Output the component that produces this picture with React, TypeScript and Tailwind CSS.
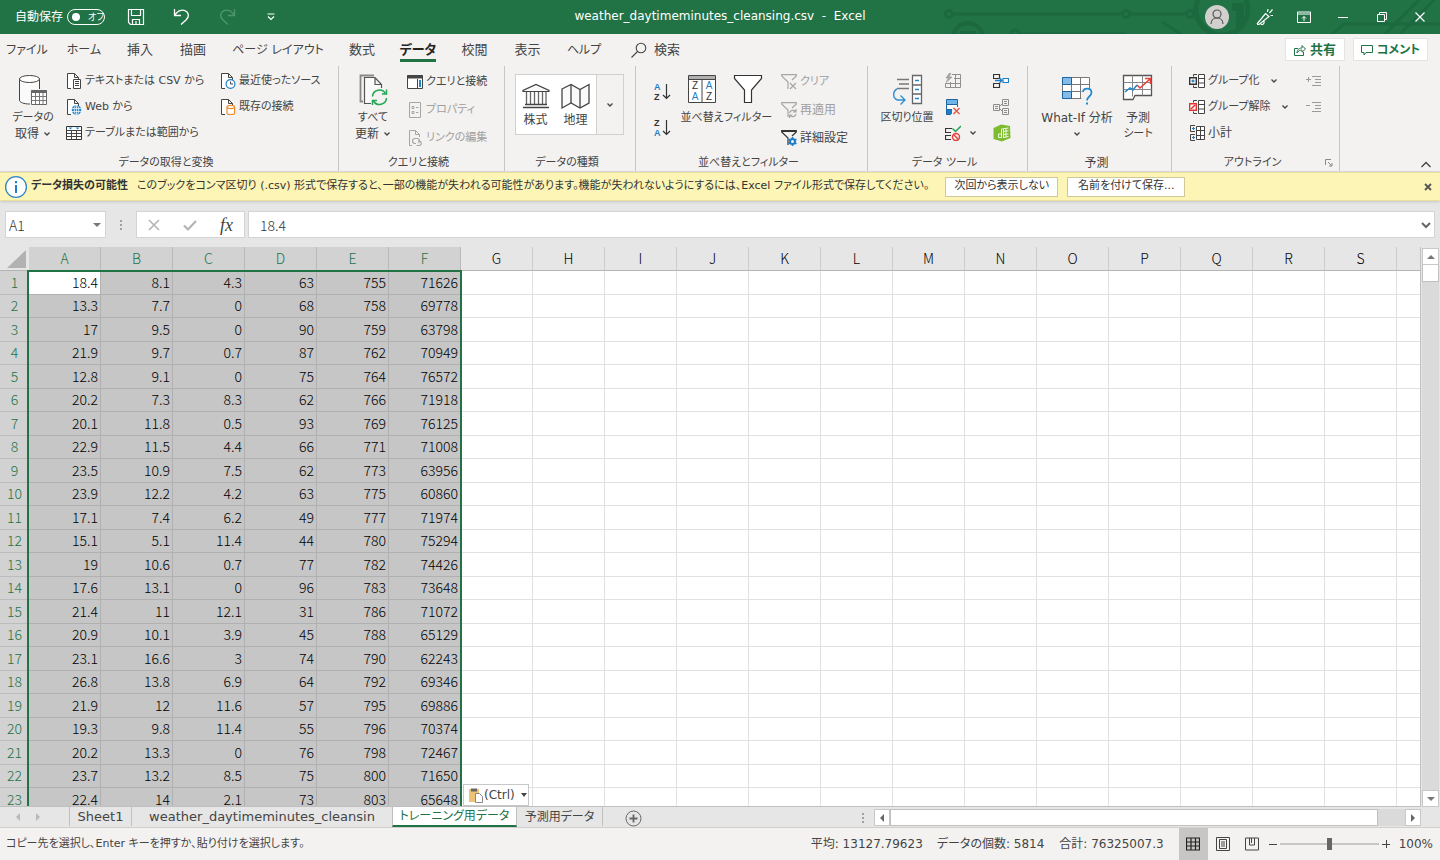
import React, { useState } from 'react';

const COLUMNS = ['A', 'B', 'C', 'D', 'E', 'F', 'G', 'H', 'I', 'J', 'K', 'L', 'M', 'N', 'O', 'P', 'Q', 'R', 'S'];
const SELECTED_COLUMNS = 6;

const ROWS = [
  [18.4, 8.1, 4.3, 63, 755, 71626],
  [13.3, 7.7, 0, 68, 758, 69778],
  [17, 9.5, 0, 90, 759, 63798],
  [21.9, 9.7, 0.7, 87, 762, 70949],
  [12.8, 9.1, 0, 75, 764, 76572],
  [20.2, 7.3, 8.3, 62, 766, 71918],
  [20.1, 11.8, 0.5, 93, 769, 76125],
  [22.9, 11.5, 4.4, 66, 771, 71008],
  [23.5, 10.9, 7.5, 62, 773, 63956],
  [23.9, 12.2, 4.2, 63, 775, 60860],
  [17.1, 7.4, 6.2, 49, 777, 71974],
  [15.1, 5.1, 11.4, 44, 780, 75294],
  [19, 10.6, 0.7, 77, 782, 74426],
  [17.6, 13.1, 0, 96, 783, 73648],
  [21.4, 11, 12.1, 31, 786, 71072],
  [20.9, 10.1, 3.9, 45, 788, 65129],
  [23.1, 16.6, 3, 74, 790, 62243],
  [26.8, 13.8, 6.9, 64, 792, 69346],
  [21.9, 12, 11.6, 57, 795, 69886],
  [19.3, 9.8, 11.4, 55, 796, 70374],
  [20.2, 13.3, 0, 76, 798, 72467],
  [23.7, 13.2, 8.5, 75, 800, 71650],
  [22.4, 14, 2.1, 73, 803, 65648],
];

const TABS = [
  { label: 'ファイル', style: 'w-[54px] text-xs' },
  { label: 'ホーム', style: 'w-[60px] text-xs' },
  { label: '挿入', style: 'w-[52px]' },
  { label: '描画', style: 'w-[54px]' },
  { label: 'ページ レイアウト', style: 'w-[116px] text-xs' },
  { label: '数式', style: 'w-[52px]' },
  { label: 'データ', style: 'w-[60px]' },
  { label: '校閲', style: 'w-[53px]' },
  { label: '表示', style: 'w-[53px]' },
  { label: 'ヘルプ', style: 'w-[60px] text-xs' },
];

// Kana labels are set one step smaller than kanji and Latin ones
const labelSize = (text: string) => (/[ぁ-んァ-ヶ]/.test(text) ? 'text-[11px]' : 'text-xs');

/* ---------- Icons ---------- */

type IconProps = { size?: number; width?: number; className?: string; children?: React.ReactNode };

const Icon = ({ size = 16, width, className = '', children }: IconProps) => (
  <svg
    width={width ?? size}
    height={size}
    viewBox={`0 0 ${width ?? size} ${size}`}
    fill="none"
    stroke="currentColor"
    aria-hidden="true"
    className={`shrink-0 ${className}`}
  >
    {children}
  </svg>
);

const Chevron = ({ className = '' }: { className?: string }) => (
  <Icon size={8} className={className}>
    <path d="M1.5 2.5 4 5l2.5-2.5" strokeWidth="1.3" />
  </Icon>
);

const Triangle = ({ dir }: { dir: 'up' | 'down' | 'left' | 'right' }) => {
  const shapes = { up: 'M0 6h8L4 2z', down: 'M0 2h8L4 6z', left: 'M6 0v8L2 4z', right: 'M2 0v8l4-4z' };
  return (
    <Icon size={8}>
      <path d={shapes[dir]} fill="currentColor" stroke="none" />
    </Icon>
  );
};

const PageShape = () => <path d="M5 15.5H1.5V.5h7l4 4V7M8.5.5v4h4" fill="#fff" stroke="#444" />;

const TextFileIcon = () => (
  <Icon>
    <PageShape />
    <path d="M7.5 6.5h7v9h-7z" fill="#fff" stroke="#444" />
    <path d="M9 8.5h4M9 10.5h4M9 12.5h4" stroke="#444" />
  </Icon>
);

const WebFileIcon = () => (
  <Icon>
    <PageShape />
    <circle cx="10.5" cy="11" r="4.8" fill="#1e88d2" stroke="none" />
    <path d="M6 9.500h9M6 12.500h9M10.5 6.5v9" stroke="#fff" strokeWidth=".7" />
    <ellipse cx="10.5" cy="11" rx="2.2" ry="4.5" stroke="#fff" strokeWidth=".7" />
  </Icon>
);

const RecentFileIcon = () => (
  <Icon>
    <PageShape />
    <circle cx="10.5" cy="11" r="4.4" fill="#fff" stroke="#1e7fc8" strokeWidth="1.2" />
    <path d="M10.5 8.5V11H13" stroke="#444" />
  </Icon>
);

const ExistingConnectionIcon = () => (
  <Icon>
    <PageShape />
    <path d="M7 8v6c0 1 1.6 1.6 3.8 1.6s3.8-.6 3.8-1.6V8" fill="#fff" stroke="#f08c28" strokeWidth="1.2" />
    <ellipse cx="10.8" cy="8" rx="3.8" ry="1.6" fill="#fff" stroke="#f08c28" strokeWidth="1.2" />
  </Icon>
);

const TableIcon = () => (
  <Icon>
    <path d="M.5 1.5h15v13H.5z" fill="#fff" stroke="#333" />
    <path d="M.5 5.5h15M.5 8.5h15M.5 11.5h15M5.5 5v9.5M10.5 5v9.5" stroke="#444" />
    <path d="M2.500 2.500h4l-2 2zM9.500 2.500h4l-2 2z" fill="#1e88d2" stroke="none" />
  </Icon>
);

const DatabaseIcon = () => (
  <Icon size={32}>
    <path d="M2.500 5v21c0 2.500 4.500 4 10 4s10-1.500 10-4V5" fill="#fafafa" stroke="#444" />
    <ellipse cx="12.500" cy="5" rx="10" ry="3.500" fill="#fff" stroke="#444" />
    <path d="M13 15h17v17H13z" fill="#f3f2f1" stroke="none" />
    <path d="M14.500 16.500h15v14h-15z" fill="#fff" stroke="#666" />
    <path d="M14.500 17.500h15" stroke="#666" strokeWidth="3" />
    <path d="M14.500 22.500h15M14.500 26.500h15M18.500 19v11M22.500 19v11M26 19v11" stroke="#777" />
  </Icon>
);

const RefreshAllIcon = () => (
  <Icon size={32}>
    <path d="M6 27.500H3.500v-26H17" stroke="#888" strokeWidth="1.800" />
    <path d="M14 29.500H7.500v-26H18l6.500 7V14M18 3.500v7h6.500" fill="#fafafa" stroke="#555" strokeWidth="1.200" />
    <circle cx="22.500" cy="23" r="9" fill="#f3f2f1" stroke="none" />
    <path d="M15.500 22.500a7 7 0 0 1 13-3M29.500 24a7 7 0 0 1-13 3" stroke="#21a655" strokeWidth="1.500" />
    <path d="M29.500 15.500v4.500H25M15.500 31v-4.500H20" stroke="#21a655" strokeWidth="1.500" />
  </Icon>
);

const QueriesIcon = () => (
  <Icon>
    <path d="M.5 1.500h15v13H.5z" fill="#fff" stroke="#444" />
    <path d="M0 3h16" stroke="#444" strokeWidth="3" />
    <path d="M10.500 5v9" stroke="#444" />
    <path d="M13 6v7" stroke="#1e88d2" strokeWidth="2" />
  </Icon>
);

const PropertiesIcon = () => (
  <Icon className="text-[#a6a6a6]">
    <path d="M2.500.5h11v15h-11z" />
    <path d="M5 4.500h2v2H5zM5 9.500h2v2H5zM9 5.500h2.500M9 10.500h2.500" />
  </Icon>
);

const EditLinksIcon = () => (
  <Icon className="text-[#a6a6a6]">
    <path d="M5 15.500H2.500V.5h6l4 4V7M8.500.5v4h4" />
    <path d="M9 13.500H8a2.500 2.500 0 0 1 0-5h2.500a2.500 2.500 0 0 1 1 4.500M11 11h1.500a2.300 2.300 0 0 1 0 4.500H9.500" strokeWidth="1.200" />
  </Icon>
);

const BankIcon = () => (
  <Icon size={28} className="text-[#444]">
    <path d="M1 8.500v-1L14 1.500l13 6v1z" fill="#fafafa" strokeWidth="1.200" />
    <path d="M4.500 9v12M8.500 9v12M12.500 9v12M16.500 9v12M20.500 9v12M24 9v12" stroke="#666" strokeWidth="1.300" />
    <path d="M3 21.500h22M1 24.500h26" strokeWidth="1.500" />
  </Icon>
);

const MapIcon = () => (
  <Icon size={28} width={30} className="text-[#444]">
    <path d="M1 6 10 1.500l9 5 9-5V20l-9 5-9-5-9 5z" fill="#fafafa" strokeWidth="1.300" />
    <path d="M10 1.500V20M19 6.500V25" strokeWidth="1.300" />
  </Icon>
);

const LetterSortIcon = ({ top, bottom }: { top: 'A' | 'Z'; bottom: 'A' | 'Z' }) => (
  <Icon size={22} width={20}>
    <g fontFamily="Liberation Sans, sans-serif" fontSize="9" fontWeight="bold" stroke="none">
      <text x="1" y="9" fill={top === 'A' ? '#1e7fc8' : '#333'}>{top}</text>
      <text x="1" y="19" fill={bottom === 'A' ? '#1e7fc8' : '#333'}>{bottom}</text>
    </g>
    <path d="M13.500 3v14M10 14l3.500 3.500L17 14" stroke="#333" strokeWidth="1.200" />
  </Icon>
);

const SortIcon = () => (
  <Icon size={30}>
    <path d="M1.500 1.500h27v27h-27z" fill="#fff" stroke="#444" />
    <path d="M2 3.500h26" stroke="#b0b0b0" strokeWidth="3" />
    <path d="M15 5v24M1 5.500h28" stroke="#444" />
    <g fontFamily="Liberation Sans, sans-serif" fontSize="10" stroke="none" textAnchor="middle">
      <text x="8" y="15" fill="#333">Z</text>
      <text x="8" y="26" fill="#1e7fc8">A</text>
      <text x="22" y="15" fill="#1e7fc8">A</text>
      <text x="22" y="26" fill="#333">Z</text>
    </g>
  </Icon>
);

const FilterIcon = () => (
  <Icon size={30}>
    <path d="M1.500 1.500h27v3L18.500 16v12.500h-7V16L1.500 4.500z" fill="#fff" stroke="#333" strokeWidth="1.200" />
  </Icon>
);

const SmallFunnel = () => <path d="M7 15V8L.7 2V.7h14.600V2L11 6" strokeWidth="1.200" />;

const ClearFilterIcon = () => (
  <Icon className="text-[#a6a6a6]">
    <SmallFunnel />
    <path d="m9 9 6 6M15 9l-6 6" strokeWidth="1.200" />
  </Icon>
);

const ReapplyIcon = () => (
  <Icon className="text-[#a6a6a6]">
    <SmallFunnel />
    <path d="M8.500 11a3.500 3.500 0 0 1 6-1.500M15 12a3.500 3.500 0 0 1-6 1.500M15 7v3h-3M8.500 16v-3h3" strokeWidth="1.200" />
  </Icon>
);

const AdvancedFilterIcon = () => (
  <Icon className="text-[#333]">
    <SmallFunnel />
    <path d="M1 1h14" strokeWidth="2" />
    <circle cx="11.500" cy="11.500" r="2.500" stroke="#1e7fc8" strokeWidth="2" />
    <path d="M11.500 7v2M11.500 14v2M7.500 9.300l2 1M13.500 12.700l2 1M7.500 13.700l2-1M13.500 10.300l2-1" stroke="#1e7fc8" strokeWidth="1.600" />
  </Icon>
);

const TextToColumnsIcon = () => (
  <Icon size={32}>
    <path d="M6 5.500h12M8 10h10M6 14.500h12" stroke="#777" strokeWidth="1.500" />
    <path d="M21.500 1.500h9v28h-9zM21.500 11h9M21.500 20h9" fill="#fff" stroke="#666" strokeWidth="1.300" />
    <path d="M24 6.500h4M24 15.500h4M24 24.500h4" stroke="#1e88d2" strokeWidth="1.500" />
    <path d="M6 15c-4 2-5 9 .5 11H13M9.500 21.500 14 26l-4.500 4.500" stroke="#2f8fd0" strokeWidth="1.400" />
  </Icon>
);

const FlashFillIcon = () => (
  <Icon className="text-[#8f8f8f]">
    <path d="M7 1.500h8.500v13H.5v-4M9 5.500h6.500M.5 10.500h15M10.500 1.500v13M5.500 9v5.500" />
    <path d="M4.500 0 1 5h2.500L1 9.500 7 4H4l2-4z" fill="#aaa" strokeWidth=".6" />
  </Icon>
);

const RemoveDuplicatesIcon = () => (
  <Icon>
    <path d="M1.500.5h11v5h-11z" fill="#6fb4e8" stroke="#1e64a0" />
    <path d="M1.500 5.500h11v5h-11z" fill="#fff" stroke="#1e64a0" />
    <path d="M1.500 10.500h4l2 2.500-2 2.500h-4z" fill="#1e7fc8" stroke="#1e64a0" />
    <path d="M7 8h8v8H7z" fill="#f3f2f1" stroke="none" />
    <path d="m8.500 9 6 6M14.500 9l-6 6" stroke="#e8504a" strokeWidth="1.300" />
  </Icon>
);

const ValidationIcon = () => (
  <Icon>
    <path d="M7 3.500H.5v4H6M6 10.500H.5v4H6" stroke="#333" strokeWidth="1.200" />
    <path d="m7.500 3.500 3 3L16 1" stroke="#21a655" strokeWidth="1.500" />
    <circle cx="11" cy="12" r="3.500" stroke="#e8403a" strokeWidth="1.400" />
    <path d="m8.500 9.500 5 5" stroke="#e8403a" strokeWidth="1.400" />
  </Icon>
);

const ConsolidateIcon = () => (
  <Icon>
    <path d="M.5 1.500h6v4h-6zM.5 10.500h6v4h-6z" stroke="#333" strokeWidth="1.200" />
    <path d="M2 7.500h7M6.500 5 9 7.500 6.500 10" stroke="#1e7fc8" strokeWidth="1.300" />
    <path d="M10 5.500h5.500v4H10z" fill="#fff" stroke="#1e7fc8" strokeWidth="1.200" />
  </Icon>
);

const RelationshipsIcon = () => (
  <Icon className="text-[#8c8c8c]">
    <path d="M.5 5.500h6v6h-6zM2 7.500h3M2 9.500h3M9.500.5h6v6h-6zM11 2.500h3M11 4.500h3M9.500 9.500h6v6h-6zM11 11.500h3M11 13.500h3M6.500 7.500l3-3M6.500 9.500l3 3" />
  </Icon>
);

const DataModelIcon = () => (
  <Icon size={18}>
    <path d="M.5 4 8 .5l9 1.500.5 12-8.500 3.500L.5 15z" fill="#7dbb2f" stroke="none" />
    <path d="M8.500 5v8.500h-3V10h3M8.500 5l7-1M10.500 7.500l5-.8M10.500 10.500l5-.5M10.500 13.500l5-1M13 4.500v9M10.500 5v9" stroke="#eef8dd" strokeWidth="1" />
  </Icon>
);

const WhatIfIcon = () => (
  <Icon size={32}>
    <path d="M1.500 3.500h27v21h-27z" fill="#fff" stroke="#777" />
    <path d="M1.500 10.500h27M1.500 17.500h27M10.500 3.500v21M19.500 3.500v21" stroke="#777" />
    <path d="M1.500 3.500h9v7h-9zM1.500 17.500h9v7h-9z" fill="#83bce9" stroke="#1e64a0" />
    <path d="M20.500 14h11v17h-11z" fill="#f3f2f1" stroke="none" />
    <path d="M22 18c.5-4.500 8.500-4.500 8.500.5 0 4-4.500 4-4.500 8" stroke="#1e88d2" strokeWidth="1.700" />
    <path d="M25 28.500h2v2h-2z" fill="#1e88d2" stroke="none" />
  </Icon>
);

const ForecastIcon = () => (
  <Icon size={32}>
    <path d="M1.500 1.500h28v20H13l-2 4H1.500z" fill="#fff" stroke="#555" strokeWidth="1.300" />
    <path d="M1.500 8.500h28M1.500 15.500h28M10.500 1.500v21M20.500 1.500v20" stroke="#888" />
    <path d="m3 18 5-4 3 2 4-5" stroke="#1e88d2" strokeWidth="1.600" />
    <path d="m15 11 3 3 10-9M23 4.500h5.500V10" stroke="#e8403a" strokeWidth="1.600" />
  </Icon>
);

const GroupIcon = ({ remove = false }: { remove?: boolean }) => (
  <Icon>
    <path d="M9.500 1.500h6v13h-6zM9.500 5.500h6M9.500 10h6" fill="#fff" stroke="#444" />
    <path d="M8 1.500H4.500v2M8 14.500H4.500v-2" stroke="#444" />
    <path d="M.7 4.700h6.600v6.600H.7z" fill="#fff" stroke={remove ? '#e03530' : '#333'} strokeWidth="1.400" />
    {remove ? (
      <path d="m2 10 4-4" stroke="#e03530" strokeWidth="1.600" />
    ) : (
      <path d="M4 6.500v3M2.500 8h3" stroke="#1e7fc8" strokeWidth="1.300" />
    )}
  </Icon>
);

const SubtotalIcon = () => (
  <Icon>
    <path d="M7.500 1.500h8v13h-8zM7.500 5.500h8M7.500 10.500h8M11.500 1.500v13" fill="#fff" stroke="#444" />
    <path d="M6 .5H1.500v6H6M6 9.500H1.500v6H6" stroke="#444" />
    <path d="M3 3.500h3M4.500 2v3M3 12.500h3M4.500 11v3" stroke="#1e7fc8" />
  </Icon>
);

const DetailIcon = ({ hide = false }: { hide?: boolean }) => (
  <Icon className="text-[#9a9a9a]">
    <path d={hide ? 'M0 6.500h4' : 'M0 6.500h5M2.500 4v5'} />
    <path d="M6 3.500h9M9 6.500h6M9 9.500h6M6 12.500h9" />
  </Icon>
);

/* ---------- Ribbon pieces ---------- */

const Group = ({ label, width, launcher = false, children }: { label: string; width: string; launcher?: boolean; children: React.ReactNode }) => (
  <section aria-label={label} className={`flex shrink-0 flex-col border-r border-[#c8c6c4] ${width}`}>
    <div className="flex h-[89px] pt-[2px]">{children}</div>
    <div className="flex h-4 items-center justify-center">
      <span className="flex-1" />
      <span className={`whitespace-nowrap leading-4 ${labelSize(label)}`}>{label}</span>
      <span className="flex flex-1 justify-end pr-[6px]">
        {launcher && (
          <button aria-label="アウトラインの設定" className="text-[#8a8886]">
            <Icon size={8}>
              <path d="M.5 6V.5H6M3 3l4 4M7 4v3H4" />
            </Icon>
          </button>
        )}
      </span>
    </div>
  </section>
);

const LargeButton = ({ icon, lines, width, arrow }: { icon: React.ReactNode; lines: string[]; width: string; arrow?: 'inline' | 'below' }) => (
  <button className={`flex shrink-0 flex-col items-center pt-[6px] ${width}`}>
    <span className="flex h-9 items-start justify-center">{icon}</span>
    {lines.map((line, i) => (
      <span key={line} className={`flex h-4 items-center whitespace-nowrap leading-4 ${labelSize(line)}`}>
        {line}
        {arrow === 'inline' && i === lines.length - 1 && <Chevron className="ml-1" />}
      </span>
    ))}
    {arrow === 'below' && <Chevron className="mt-1" />}
  </button>
);

const SmallButton = ({ icon, label, disabled, tall, arrow }: { icon: React.ReactNode; label: string; disabled?: boolean; tall?: boolean; arrow?: boolean }) => (
  <button
    disabled={disabled}
    className={`flex items-center gap-[3px] whitespace-nowrap ${labelSize(label)} ${tall ? 'h-7' : 'h-[26px]'} ${disabled ? 'text-[#a19f9d]' : ''}`}
  >
    {icon}
    {label}
    {arrow && <Chevron className="ml-[7px]" />}
  </button>
);

const IconButton = ({ label, children }: { label: string; children: React.ReactNode }) => (
  <button aria-label={label} className="flex h-[26px] items-center gap-2">
    {children}
  </button>
);

/* ---------- Page sections ---------- */

const TitleBar = () => (
  <header className="relative flex h-[34px] shrink-0 items-center overflow-hidden bg-[#217346] text-white">
    <svg width="500" height="34" fill="none" stroke="#1d693f" strokeWidth="3" aria-hidden="true" className="absolute right-0 top-0">
      <circle cx="9" cy="14" r="3.500" />
      <path d="M13 14h169M190 14h56" />
      <circle cx="186" cy="14" r="3.500" />
      <circle cx="250" cy="14" r="3.500" />
      <circle cx="282" cy="9" r="26" strokeWidth="5" />
      <path d="M292 7h8v22" strokeWidth="8" />
      <circle cx="28" cy="38" r="15" strokeWidth="4" />
      <path d="M20 33h16" strokeWidth="4" />
      <circle cx="75" cy="34" r="4" />
      <path d="M80 34h105M222 22l22 14" />
      <path d="m390 36 14-12h96M445 34l34-34M460 34l34-34" />
    </svg>
    <label className="relative flex items-center gap-1 whitespace-nowrap pl-[15px]">
      自動保存
      <input type="checkbox" role="switch" className="sr-only" />
      <span className="flex h-4 w-[38px] items-center gap-2 rounded-full border border-white pl-1 text-[9px] leading-3">
        <span className="size-2 shrink-0 rounded-full bg-white" />
        オフ
      </span>
    </label>
    <div className="relative flex items-center pl-[22px]">
      <button aria-label="上書き保存">
        <Icon size={18}>
          <path d="M1.500 1.500h15v15h-13l-2-2zM4.500 1.500v6h9v-6M5.500 16.500v-5h7v5M9 13v3" strokeWidth="1.200" />
        </Icon>
      </button>
      <button aria-label="元に戻す" className="ml-[28px]">
        <Icon size={18}>
          <path d="M1.500 1v6.500H8M2 7c3-5.500 9-6 12-3 2.500 3 1.500 5.500-1 8L8 16.500" strokeWidth="1.300" />
        </Icon>
      </button>
      <button aria-label="やり直し" disabled className="ml-[28px] text-[#4f9670]">
        <Icon size={18}>
          <path d="M15.500 1v6.500H9M15 7c-3-5.500-9-6-12-3-2.500 3-1.500 5.500 1 8l5 4.500" strokeWidth="1.300" />
        </Icon>
      </button>
      <button aria-label="クイック アクセス ツール バーのカスタマイズ" className="ml-[30px]">
        <Icon size={8}>
          <path d="M.5 1h7M1 3.500l3 3 3-3" strokeWidth="1.200" />
        </Icon>
      </button>
    </div>
    <h1 className="pointer-events-none absolute inset-x-0 top-0 flex h-8 items-center justify-center whitespace-pre font-normal">
      weather_daytimeminutes_cleansing.csv  -  Excel
    </h1>
    <div className="relative ml-auto flex items-center">
      <button aria-label="アカウント" className="flex size-6 items-center justify-center rounded-full bg-[#d2d0ce] text-[#555]">
        <Icon size={16}>
          <circle cx="8" cy="5" r="4" strokeWidth="1.200" />
          <path d="M2 15c0-8 12-8 12 0" strokeWidth="1.200" />
        </Icon>
      </button>
      <button aria-label="新機能" className="ml-[27px]">
        <Icon size={18}>
          <path d="m1 16 8.500-10.500 3.500 3L3 16.500H1M4.500 15.500c1.500 2 4 1 3.500-2.500M11.500 4l.5-3M13.500 5l3-3.500M14.500 7.500H17" strokeWidth="1.200" />
        </Icon>
      </button>
      <button aria-label="リボンの表示オプション" className="ml-[23px]">
        <Icon size={14}>
          <path d="M.5 2h13v10.500H.5zM.5 4h13M7 11V6.500M5 8.500l2-2 2 2" />
        </Icon>
      </button>
      <button aria-label="最小化" className="ml-[26px]">
        <Icon size={12}><path d="M1 6.500h10" /></Icon>
      </button>
      <button aria-label="元に戻す（縮小）" className="ml-[27px]">
        <Icon size={12}><path d="M1.500 3.500h7v7h-7zM3.500 3V1.500h7v7H9" /></Icon>
      </button>
      <button aria-label="閉じる" className="ml-[26px] mr-[14px]">
        <Icon size={12}><path d="m1.500 1.500 9 9M10.500 1.500l-9 9" strokeWidth="1.200" /></Icon>
      </button>
    </div>
  </header>
);

const TabBar = () => {
  const [tab, setTab] = useState('データ');
  return (
    <nav aria-label="リボン タブ" className="flex h-8 items-start bg-[#f3f2f1] text-[13px]">
      {TABS.map(({ label, style }) => (
        <button key={label} onClick={() => setTab(label)} className={`flex h-7 justify-center whitespace-nowrap ${style}`}>
          <span className={`flex h-7 items-center border-b-3 pt-[6px] ${tab === label ? 'border-[#217346] font-bold text-[#252423]' : 'border-transparent'}`}>
            {label}
          </span>
        </button>
      ))}
      <button className="ml-[17px] flex h-[31px] items-center gap-[7px]">
        <Icon size={16}>
          <circle cx="10" cy="6" r="4.800" strokeWidth="1.100" />
          <path d="m6.500 9.500-6 6" strokeWidth="1.100" />
        </Icon>
        検索
      </button>
      <div className="ml-auto flex gap-2 pr-3 pt-1 font-bold text-[#217346]">
        <button className="flex h-[23px] w-[60px] items-center justify-center gap-1 border border-[#e6e4e2] bg-white">
          <Icon size={12}>
            <path d="M4 4.500H.5v7h9V8M3 9c0-4 3-5 5-5V1.500L11.500 5 8 8.200V6C6 6 4 7 3 9z" />
          </Icon>
          共有
        </button>
        <button className="flex h-[23px] w-[75px] items-center justify-center gap-1 border border-[#e6e4e2] bg-white text-xs">
          <Icon size={12}>
            <path d="M.5 1.500h11v7H5l-2 2.500V8.500H.5z" />
          </Icon>
          コメント
        </button>
      </div>
    </nav>
  );
};

const Ribbon = () => (
  <div className="flex h-[106px] shrink-0 border-b border-[#dddbd9] bg-[#f3f2f1] text-[#444]">
    <Group label="データの取得と変換" width="w-[339px]">
      <LargeButton icon={<DatabaseIcon />} lines={['データの', '取得']} width="ml-[6px] w-[54px]" arrow="inline" />
      <div className="ml-[6px] w-[154px]">
        <SmallButton icon={<TextFileIcon />} label="テキストまたは CSV から" />
        <SmallButton icon={<WebFileIcon />} label="Web から" />
        <SmallButton icon={<TableIcon />} label="テーブルまたは範囲から" />
      </div>
      <div>
        <SmallButton icon={<RecentFileIcon />} label="最近使ったソース" />
        <SmallButton icon={<ExistingConnectionIcon />} label="既存の接続" />
      </div>
    </Group>

    <Group label="クエリと接続" width="w-[166px]">
      <LargeButton icon={<RefreshAllIcon />} lines={['すべて', '更新']} width="ml-[6px] w-[56px]" arrow="inline" />
      <div className="ml-[6px]">
        <SmallButton icon={<QueriesIcon />} label="クエリと接続" tall />
        <SmallButton icon={<PropertiesIcon />} label="プロパティ" disabled tall />
        <SmallButton icon={<EditLinksIcon />} label="リンクの編集" disabled tall />
      </div>
    </Group>

    <Group label="データの種類" width="w-[131px]">
      <div className="ml-[10px] mt-[6px] flex h-[61px] w-[109px] border border-[#d2d0ce] bg-white">
        <button className="flex w-[39px] flex-col items-center gap-[1px] pt-2">
          <BankIcon />
          株式
        </button>
        <button className="flex w-[41px] flex-col items-center gap-[1px] pt-2">
          <MapIcon />
          地理
        </button>
        <button aria-label="その他のデータの種類" className="flex flex-1 items-center justify-center border-l border-[#d2d0ce] bg-[#f3f2f1]">
          <Chevron />
        </button>
      </div>
    </Group>

    <Group label="並べ替えとフィルター" width="w-[232px]">
      <div className="ml-[17px] flex w-[26px] flex-col gap-[14px] pt-[13px]">
        <button aria-label="昇順"><LetterSortIcon top="A" bottom="Z" /></button>
        <button aria-label="降順"><LetterSortIcon top="Z" bottom="A" /></button>
      </div>
      <LargeButton icon={<SortIcon />} lines={['並べ替え']} width="w-[46px]" />
      <LargeButton icon={<FilterIcon />} lines={['フィルター']} width="w-[46px]" />
      <div className="ml-[10px]">
        <SmallButton icon={<ClearFilterIcon />} label="クリア" disabled tall />
        <SmallButton icon={<ReapplyIcon />} label="再適用" disabled tall />
        <SmallButton icon={<AdvancedFilterIcon />} label="詳細設定" tall />
      </div>
    </Group>

    <Group label="データ ツール" width="w-[160px]">
      <LargeButton icon={<TextToColumnsIcon />} lines={['区切り位置']} width="ml-[10px] w-[58px]" />
      <div className="ml-[9px] w-[48px]">
        <IconButton label="フラッシュ フィル"><FlashFillIcon /></IconButton>
        <IconButton label="重複の削除"><RemoveDuplicatesIcon /></IconButton>
        <IconButton label="データの入力規則"><ValidationIcon /><Chevron /></IconButton>
      </div>
      <div>
        <IconButton label="統合"><ConsolidateIcon /></IconButton>
        <IconButton label="リレーションシップ"><RelationshipsIcon /></IconButton>
        <IconButton label="データ モデルの管理"><DataModelIcon /></IconButton>
      </div>
    </Group>

    <Group label="予測" width="w-[144px]">
      <LargeButton icon={<WhatIfIcon />} lines={['What-If 分析']} width="ml-[8px] w-[82px]" arrow="below" />
      <LargeButton icon={<ForecastIcon />} lines={['予測', 'シート']} width="w-[40px]" />
    </Group>

    <Group label="アウトライン" width="w-[168px]" launcher>
      <div className="ml-[17px] w-[117px]">
        <SmallButton icon={<GroupIcon />} label="グループ化" arrow />
        <SmallButton icon={<GroupIcon remove />} label="グループ解除" arrow />
        <SmallButton icon={<SubtotalIcon />} label="小計" />
      </div>
      <div>
        <IconButton label="詳細データの表示"><DetailIcon /></IconButton>
        <IconButton label="詳細を表示しない"><DetailIcon hide /></IconButton>
      </div>
    </Group>

    <button aria-label="リボンを折りたたむ" className="ml-auto mr-2 self-end">
      <Icon size={12}><path d="m1.500 8 4.500-4.500L10.500 8" strokeWidth="1.300" /></Icon>
    </button>
  </div>
);

const MessageBar = () => (
  <div role="status" className="z-10 flex h-[29px] shrink-0 items-center whitespace-nowrap border-y border-[#e8e0a0] bg-[#fcf5b5] pl-1 text-[11px] text-[#333] shadow-sm">
    <Icon size={24}>
      <circle cx="12" cy="12" r="10.400" fill="#fff" stroke="#2f86c4" strokeWidth="1.300" />
      <path d="M12 10v8M12 6v2.200" stroke="#1e7fc8" strokeWidth="2" />
    </Icon>
    <strong className="ml-[3px] w-[101px] text-[11px]">データ損失の可能性</strong>
    <span className="ml-[5px] min-w-[791px]">
      このブックをコンマ区切り (.csv) 形式で保存すると、一部の機能が失われる可能性があります。機能が失われないようにするには、Excel ファイル形式で保存してください。
    </span>
    <button className="ml-4 h-5 w-[113px] border border-[#cfc99a] bg-white">次回から表示しない</button>
    <button className="ml-[9px] h-5 w-[118px] border border-[#cfc99a] bg-white">名前を付けて保存...</button>
    <button aria-label="メッセージを閉じる" className="ml-auto mr-2">
      <Icon size={8}><path d="m1 1 6 6M7 1 1 7" strokeWidth="1.800" stroke="#555" /></Icon>
    </button>
  </div>
);

const FormulaBar = () => (
  <div className="flex h-[46px] shrink-0 items-start px-[5px] pt-[10px] font-['Noto_Sans_CJK_JP',sans-serif] text-sm font-light text-[#333]">
    <div className="flex h-[27px] w-[101px] items-center border border-[#d4d4d4] bg-white pr-1">
      <input aria-label="名前ボックス" defaultValue="A1" className="w-full min-w-0 pl-[3px] outline-none" />
      <button aria-label="名前の一覧" className="text-[#777]"><Triangle dir="down" /></button>
    </div>
    <div className="flex h-[27px] w-[30px] items-center justify-center text-[#a0a0a0]">
      <Icon size={12} width={2}><path d="M1 1v2M1 5v2M1 9v2" strokeWidth="2" /></Icon>
    </div>
    <div className="flex h-[27px] w-[109px] items-center justify-between border border-[#d4d4d4] bg-white px-[11px]">
      <button aria-label="キャンセル" className="text-[#b4b4b4]">
        <Icon size={12}><path d="m1 1 10 10M11 1 1 11" strokeWidth="1.600" /></Icon>
      </button>
      <button aria-label="入力" className="text-[#b4b4b4]">
        <Icon size={14}><path d="m1 7.500 4 4L13 3" strokeWidth="2.200" /></Icon>
      </button>
      <button aria-label="関数の挿入" className="font-['Liberation_Serif',serif] text-lg italic leading-5 text-[#444]">fx</button>
    </div>
    <div className="ml-[3px] flex h-[27px] flex-1 items-center border border-[#d4d4d4] bg-white pr-[3px]">
      <input aria-label="数式バー" defaultValue="18.4" className="min-w-0 flex-1 pl-[11px] outline-none" />
      <button aria-label="数式バーの展開" className="text-[#666]">
        <Icon size={10}><path d="m1 3 4 4 4-4" strokeWidth="2" /></Icon>
      </button>
    </div>
  </div>
);

const Sheet = () => (
  <div className="relative min-w-0 flex-1 overflow-hidden border-b border-r border-[#c0c0c0]">
    <table className="w-full table-fixed border-separate border-spacing-0 font-['Noto_Sans_CJK_JP',sans-serif] text-sm font-light leading-5 text-black">
      <colgroup>
        <col className="w-[29px]" />
        {COLUMNS.map((c) => <col key={c} className="w-[72px]" />)}
        <col />
      </colgroup>
      <thead>
        <tr className="h-6">
          <th aria-label="すべて選択" className="border-b border-[#b4b4b4] p-0">
            <Icon size={20} className="ml-auto mr-[2px]"><path d="M19 1v18H0z" fill="#b2b2b2" stroke="none" /></Icon>
          </th>
          {COLUMNS.map((c, i) => (
            <th
              key={c}
              scope="col"
              className={`border-b border-r p-0 pb-[2px] font-light ${i < SELECTED_COLUMNS ? 'border-[#b9b9b9] bg-[#d2d2d2] text-[#217346]' : 'border-b-[#b4b4b4] border-r-[#cbcbcb]'}`}
            >
              {c}
            </th>
          ))}
          <th className="border-b border-[#b4b4b4] p-0" />
        </tr>
      </thead>
      <tbody>
        {ROWS.map((row, r) => (
          <tr key={r} className="h-[23px] odd:h-6">
            <th scope="row" className="border-b border-[#bcbcbc] bg-[#d2d2d2] p-0 pb-[2px] font-light text-[#217346]">{r + 1}</th>
            {COLUMNS.map((c, i) => (
              <td
                key={c}
                className={`border-b border-r p-0 pb-[2px] pr-[2px] text-right ${i >= SELECTED_COLUMNS ? 'border-[#e1e1e1] bg-white' : r === 0 && i === 0 ? 'border-[#b0b0b0] bg-white' : 'border-[#b0b0b0] bg-[#c6c6c6]'}`}
              >
                {row[i]}
              </td>
            ))}
            <td className="border-b border-[#e1e1e1] bg-white p-0" />
          </tr>
        ))}
      </tbody>
    </table>
    {/* Selection outline runs on below the visible rows */}
    <div className="pointer-events-none absolute -bottom-1 left-[27px] top-[23px] w-[435px] border-2 border-[#217346]" />
    <button className="absolute bottom-0 left-[463px] flex h-[22px] w-[66px] items-center border border-[#c8c8c8] bg-white pl-1 text-[#444]">
      <Icon size={16}>
        <path d="M1 2h10v13H1z" fill="#eec274" stroke="none" />
        <path d="M3 3h6" stroke="#666" strokeWidth="3" />
        <path d="M7.500 6.500h4l3 3v6h-7z" fill="#fff" stroke="#888" />
      </Icon>
      <span className="flex-1 text-left">(Ctrl)</span>
      <span className="pr-[1px]">
        <Icon size={6}><path d="M0 1h6L3 5z" fill="currentColor" stroke="none" /></Icon>
      </span>
    </button>
  </div>
);

const VerticalScroll = () => (
  <div className="flex w-[19px] flex-col px-[1px] pt-[1px] text-[#777]">
    <button aria-label="上へスクロール" className="flex h-[17px] items-center justify-center border border-[#c8c8c8] bg-white"><Triangle dir="up" /></button>
    <div className="flex-1 bg-[#dadada]">
      <div className="h-[17px] border border-t-0 border-[#c0c0c0] bg-white" />
    </div>
    <button aria-label="下へスクロール" className="flex h-[17px] items-center justify-center border border-[#c8c8c8] bg-white"><Triangle dir="down" /></button>
  </div>
);

const SheetTabs = () => (
  <div className="flex h-[21px] shrink-0 items-start border-b border-[#cfcfcf] text-[13px] leading-[18px] text-[#444]">
    <div className="flex h-5 w-[69px] items-center gap-3 pl-[14px] text-[#b8b8b8]">
      <button aria-label="前のシート"><Triangle dir="left" /></button>
      <button aria-label="次のシート"><Triangle dir="right" /></button>
    </div>
    <button className="h-[19px] w-[63px] border-x border-[#c0c0c0]">Sheet1</button>
    <button className="h-[19px] w-[260px] whitespace-nowrap">weather_daytimeminutes_cleansin</button>
    <button className="h-5 w-[125px] whitespace-nowrap border-x border-b-2 border-x-[#c0c0c0] border-b-[#217346] bg-white text-xs text-[#217346]">トレーニング用データ</button>
    <button className="h-[19px] w-[86px] whitespace-nowrap border-r border-[#c0c0c0] text-xs">予測用データ</button>
    <button aria-label="新しいシート" className="ml-[22px] mt-[3px] text-[#666]">
      <Icon size={17}>
        <circle cx="8.500" cy="8.500" r="7.500" />
        <path d="M8.500 4.500v8M4.500 8.500h8" strokeWidth="1.800" />
      </Icon>
    </button>
    <div className="ml-auto mt-[5px] text-[#a0a0a0]">
      <Icon size={12} width={2}><path d="M1 1v2M1 5v2M1 9v2" strokeWidth="2" /></Icon>
    </div>
    <div className="ml-[10px] mr-[19px] mt-[2px] flex h-[17px] w-[547px] bg-[#dadada] text-[#666]">
      <button aria-label="左へスクロール" className="flex w-4 items-center justify-center border border-[#c8c8c8] bg-white"><Triangle dir="left" /></button>
      <div className="w-[488px] border border-[#c0c0c0] bg-white" />
      <button aria-label="右へスクロール" className="ml-auto flex w-4 items-center justify-center border border-[#c8c8c8] bg-white"><Triangle dir="right" /></button>
    </div>
  </div>
);

const StatusBar = () => {
  const [zoom, setZoom] = useState(100);
  return (
    <footer className="flex h-8 shrink-0 items-center whitespace-nowrap bg-[#f3f2f1] pl-[6px] text-[#444]">
      <span className="text-[11px]">コピー先を選択し、Enter キーを押すか、貼り付けを選択します。</span>
      <span className="ml-auto">平均: 13127.79623</span>
      <span className="ml-[14px]">データの個数: 5814</span>
      <span className="ml-[15px]">合計: 76325007.3</span>
      <button aria-label="標準" className="ml-[15px] flex h-8 w-[29px] items-center justify-center bg-[#c8c6c4] text-[#222]">
        <Icon size={14}><path d="M.5 1h13v12H.5zM.5 5h13M.5 9h13M5 1v12M9.500 1v12" strokeWidth="1.200" /></Icon>
      </button>
      <button aria-label="ページ レイアウト" className="flex w-[30px] justify-center">
        <Icon size={14}><path d="M.5.5h13v13H.5zM3.500 2.500h7v9h-7zM5 5h4M5 7h4M5 9h4" /></Icon>
      </button>
      <button aria-label="改ページ プレビュー" className="flex w-[29px] justify-center">
        <Icon size={14}><path d="M.5 1h13v12H.5zM4.500 1v7H9.500M6.500 1v5M9.500 1v7" /></Icon>
      </button>
      <button aria-label="縮小" className="ml-[2px]"><Icon size={8}><path d="M0 4.500h8" /></Icon></button>
      <input
        type="range"
        aria-label="ズーム"
        min={10}
        max={190}
        value={zoom}
        onChange={(e) => setZoom(Number(e.target.value))}
        className="mx-[3px] h-3 w-[99px] appearance-none bg-transparent [&::-webkit-slider-runnable-track]:h-[2px] [&::-webkit-slider-runnable-track]:bg-[#c8c6c4] [&::-webkit-slider-thumb]:-mt-[5px] [&::-webkit-slider-thumb]:h-3 [&::-webkit-slider-thumb]:w-[5px] [&::-webkit-slider-thumb]:appearance-none [&::-webkit-slider-thumb]:bg-[#666]"
      />
      <button aria-label="拡大"><Icon size={8}><path d="M0 4.500h8M4.500 0v8" /></Icon></button>
      <output className="ml-[9px] mr-[7px]">{zoom}%</output>
    </footer>
  );
};

const App: React.FC = () => (
  <div className="flex h-screen min-h-[400px] flex-col overflow-hidden bg-[#e6e6e6] font-['DejaVu_Sans','Noto_Sans_CJK_JP',sans-serif] text-xs text-[#444] [font-feature-settings:'palt']">
    <TitleBar />
    <TabBar />
    <Ribbon />
    <MessageBar />
    <FormulaBar />
    <main className="flex min-h-0 flex-1">
      <Sheet />
      <VerticalScroll />
    </main>
    <SheetTabs />
    <StatusBar />
  </div>
);

export default App;
